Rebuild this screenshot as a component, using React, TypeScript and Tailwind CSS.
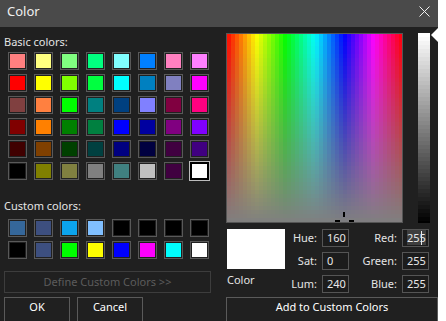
import React from 'react';

const basicColors = [
  ['#ff8080', '#ffff80', '#80ff80', '#00ff80', '#80ffff', '#0080ff', '#ff80c0', '#ff80ff'],
  ['#ff0000', '#ffff00', '#80ff00', '#00ff40', '#00ffff', '#0080c0', '#8080c0', '#ff00ff'],
  ['#804040', '#ff8040', '#00ff00', '#008080', '#004080', '#8080ff', '#800040', '#ff0080'],
  ['#800000', '#ff8000', '#008000', '#008040', '#0000ff', '#0000a0', '#800080', '#8000ff'],
  ['#400000', '#804000', '#004000', '#004040', '#000080', '#000040', '#400040', '#400080'],
  ['#000000', '#808000', '#808040', '#808080', '#408080', '#c0c0c0', '#400040', '#ffffff'],
];

const customColors = [
  ['#35679a', '#3d4f7f', '#0ca4ec', '#80bfff', '#000000', '#000000', '#000000', '#000000'],
  ['#000000', '#3d4f7f', '#00ff00', '#ffff00', '#0000ff', '#ff00ff', '#00ffff', '#ffffff'],
];

const Swatch = ({ color, selected }: { color: string; selected?: boolean }) => {
  if (selected) {
    return (
      <div className="w-[19px] h-[18px] relative">
        <div className="absolute -inset-px border border-[#bdbdbd] bg-black p-[2px]">
          <div className="w-full h-full" style={{ backgroundColor: color }} />
        </div>
      </div>
    );
  }
  return (
    <div className="w-[19px] h-[18px] border border-[#595959] p-px">
      <div className="w-full h-full" style={{ backgroundColor: color }} />
    </div>
  );
};

const SwatchGrid = ({ rows, selected }: { rows: string[][]; selected?: [number, number] }) => (
  <div className="grid grid-cols-[repeat(8,19px)] gap-x-[7px] gap-y-[4px] ml-[4px]">
    {rows.map((row, r) =>
      row.map((c, i) => (
        <Swatch key={`${r}-${i}`} color={c} selected={!!selected && selected[0] === r && selected[1] === i} />
      ))
    )}
  </div>
);

// windows-style blocky hue/sat field, lum fixed at 120
const Spectrum = () => {
  const cols = 44;
  const rows = 47;
  const cells: React.ReactElement[] = [];
  for (let j = 0; j < rows; j++) {
    for (let i = 0; i < cols; i++) {
      const h = ((i + 0.5) / cols) * 360;
      const s = Math.max(0, 100 - ((j + 0.5) / rows) * 100);
      cells.push(
        <rect key={`${i}-${j}`} x={i * 4} y={j * 4} width={4.05} height={4.05} fill={`hsl(${h}, ${s}%, 50%)`} />
      );
    }
  }
  return (
    <svg width="175" height="188" viewBox="0 0 175 188" className="block" shapeRendering="crispEdges">
      {cells}
      {/* crosshair */}
      <rect x={116} y={178} width={2} height={5} fill="#000" />
      <rect x={108} y={186} width={5} height={2} fill="#000" />
      <rect x={122} y={186} width={5} height={2} fill="#000" />
    </svg>
  );
};

const LumBar = () => {
  const rows = 48;
  return (
    <svg width="12" height="190" viewBox="0 0 12 190" className="block" shapeRendering="crispEdges">
      {Array.from({ length: rows }, (_, j) => {
        const v = Math.round(255 * (1 - j / (rows - 1)));
        return <rect key={j} x={0} y={j * 4} width={12} height={4.05} fill={`rgb(${v},${v},${v})`} />;
      })}
    </svg>
  );
};

const Field = ({ label, value, selected }: { label: string; value: string; selected?: boolean }) => (
  <div className="flex items-center h-[18px]">
    <span className="flex-1 text-right pr-[5px]">{label}</span>
    <div className="relative w-[27px] h-[18px] border border-[#555] bg-[#1c1c1c] pl-[4px] leading-[16px] text-[#e8e8e8]">
      {selected ? <span className="bg-[#3e3e3e]">{value}</span> : value}
      {selected && <div className="absolute left-[18px] top-[1px] w-px h-[14px] bg-[#e8e8e8]" />}
    </div>
  </div>
);

export default function App() {
  return (
    <div className="w-[446px] h-[321px] bg-white font-['Noto_Sans',sans-serif] text-[11px] text-[#e4e4e4] overflow-hidden">
      <div className="w-[438px] h-[321px] bg-[#202020] flex flex-col overflow-hidden">
        {/* title bar */}
        <div className="h-[27px] shrink-0 bg-[#4a4a4a] flex items-start justify-between pl-[7px] pr-[8px] pt-[3px]">
          <span className="text-[13px] leading-[17px] text-[#f0f0f0]">Color</span>
          <svg width="11" height="11" viewBox="0 0 11 11" className="mt-[3px]">
            <path d="M0.5 0.5 L10.5 10.5 M10.5 0.5 L0.5 10.5" stroke="#f0f0f0" strokeWidth="1" />
          </svg>
        </div>

        <div className="flex flex-1">
          {/* left side */}
          <div className="w-[226px] pl-[4px] flex flex-col">
            <div className="mt-[7px] leading-[15px]">Basic colors:</div>
            <div className="mt-[3px]">
              <SwatchGrid rows={basicColors} selected={[5, 7]} />
            </div>
            <div className="mt-[18px] leading-[15px]">Custom colors:</div>
            <div className="mt-[6px]">
              <SwatchGrid rows={customColors} />
            </div>
            <div className="mt-[12px] w-[207px] h-[22px] border border-[#3d3d3d] flex items-center justify-center text-[#5c5c5c]">
              Define Custom Colors &gt;&gt;
            </div>
            <div className="mt-[4px] flex gap-[7px]">
              <div className="w-[66px] h-[28px] border border-[#5a5a5a] text-center leading-[15px] pt-px text-white">OK</div>
              <div className="w-[66px] h-[28px] border border-[#5a5a5a] text-center leading-[15px] pt-px text-white">Cancel</div>
            </div>
          </div>

          {/* right side */}
          <div className="w-[212px] flex flex-col">
            <div className="mt-[6px] flex items-start">
              <div className="w-[177px] h-[190px] border border-[#555]">
                <Spectrum />
              </div>
              <div className="ml-[15px] relative">
                <LumBar />
                <svg width="8" height="14" viewBox="0 0 8 14" className="absolute left-[13px] -top-[5px]">
                  <polygon points="0,7 7,0 7,14" fill="#ffffff" />
                </svg>
              </div>
            </div>

            <div className="mt-[6px] flex">
              <div className="w-[59px] pl-px">
                <div className="w-[58px] h-[40px] bg-white" />
                <div className="mt-[3px] leading-[15px]">Color</div>
              </div>
              <div className="w-[64px] flex flex-col gap-[5px]">
                <Field label="Hue:" value="160" />
                <Field label="Sat:" value="0" />
                <Field label="Lum:" value="240" />
              </div>
              <div className="w-[80px] flex flex-col gap-[5px]">
                <Field label="Red:" value="255" selected />
                <Field label="Green:" value="255" />
                <Field label="Blue:" value="255" />
              </div>
            </div>

            <div className="mt-[4px] w-[212px] h-[28px] border border-[#5a5a5a] text-center leading-[15px] pt-px text-white">
              Add to Custom Colors
            </div>
          </div>
        </div>
      </div>
    </div>
  );
}
